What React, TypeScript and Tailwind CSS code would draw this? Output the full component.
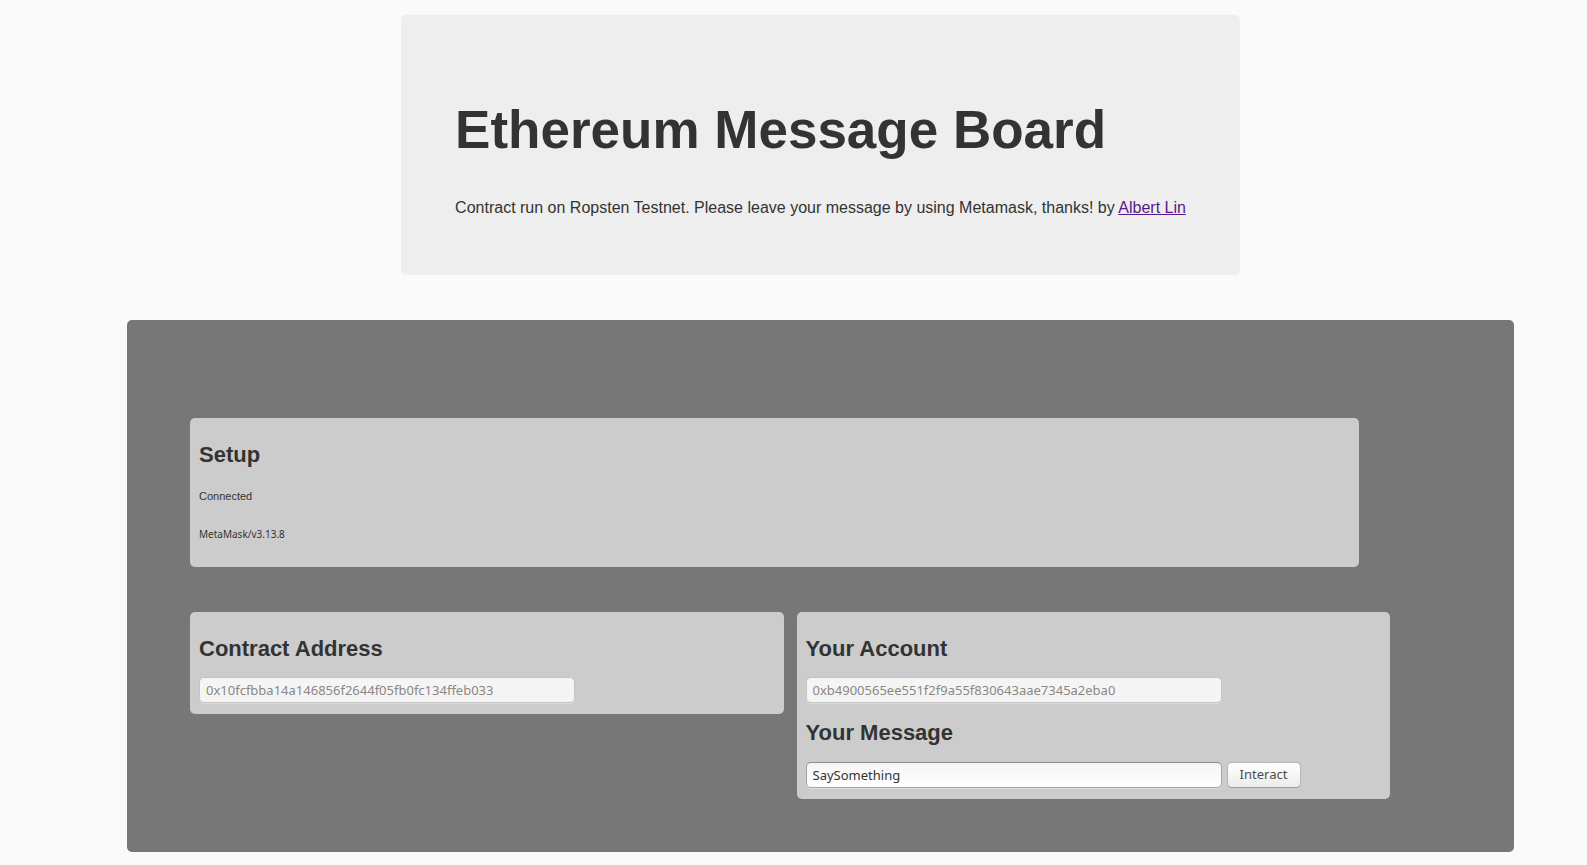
import { useState } from "react";
import type { ReactNode } from "react";

function Panel({ className = "", children }: { className?: string; children: ReactNode }) {
  return <section className={`rounded-[5px] bg-[#ccc] px-[9px] ${className}`}>{children}</section>;
}

function PanelTitle({ children, htmlFor }: { children: ReactNode; htmlFor?: string }) {
  return (
    <h2 className="text-[22px] leading-[26px] font-bold">
      {htmlFor ? <label htmlFor={htmlFor}>{children}</label> : children}
    </h2>
  );
}

const disabledField =
  "h-[26px] w-full rounded-[5px] border border-[#c4c4c4] bg-[#f5f5f5] px-[6px] font-['Noto_Sans',sans-serif] text-[13px] text-[#8b8782] shadow-[0_1px_0_#dcdcdc]";

export default function App() {
  const [message, setMessage] = useState("SaySomething");

  return (
    <div className="min-h-screen bg-[#fafafa] pt-[15px] pr-[73px] pb-[13px] pl-[127px] font-['Liberation_Sans',Arial,sans-serif] text-[#333]">
      <header className="mx-auto w-fit rounded-[5px] bg-[#eee] px-[54px] pt-[82px] pb-[57px]">
        <h1 className="text-[53px] leading-[66px] font-bold">Ethereum Message Board</h1>
        <p className="mt-[35px] text-[16px] leading-[20px]">
          Contract run on Ropsten Testnet. Please leave your message by using Metamask, thanks! by{" "}
          <a href="#albert-lin" className="text-[#551a8b] underline">
            Albert Lin
          </a>
        </p>
      </header>

      <main className="mt-[45px] rounded-[5px] bg-[#777] pt-[98px] pr-[124px] pb-[53px] pl-[63px]">
        <Panel className="mr-[31px] pt-[24px] pb-[25px]">
          <PanelTitle>Setup</PanelTitle>
          <p className="mt-[20px] text-[11px] leading-[16px]">Connected</p>
          <p className="mt-[22px] font-['Noto_Sans',sans-serif] text-[10px] leading-[16px]">MetaMask/v3.13.8</p>
        </Panel>

        <div className="mt-[45px] grid grid-cols-2 items-start gap-[13px]">
          <Panel className="pt-[24px] pb-[11px]">
            <PanelTitle htmlFor="contract">Contract Address</PanelTitle>
            <div className="mt-[15px] flex w-[376px] max-w-full">
              <input
                id="contract"
                disabled
                className={disabledField}
                defaultValue="0x10fcfbba14a146856f2644f05fb0fc134ffeb033"
              />
            </div>
          </Panel>

          <Panel className="pt-[24px] pb-[11px]">
            <PanelTitle htmlFor="account">Your Account</PanelTitle>
            <div className="mt-[15px] flex w-[416px] max-w-full">
              <input
                id="account"
                disabled
                className={disabledField}
                defaultValue="0xb4900565ee551f2f9a55f830643aae7345a2eba0"
              />
            </div>
            <div className="mt-[17px]">
              <PanelTitle htmlFor="message">Your Message</PanelTitle>
            </div>
            <div className="mt-[16px] flex gap-[5px]">
              <input
                id="message"
                value={message}
                onChange={(event) => setMessage(event.target.value)}
                className="h-[26px] w-[416px] min-w-0 rounded-[5px] border border-[#a3a3a3] border-t-[#8c8c8c] bg-linear-to-b from-[#f5f5f5] to-white px-[6px] font-['Noto_Sans',sans-serif] text-[13px] shadow-[0_1px_0_#e2e2e2]"
              />
              <button
                type="button"
                className="h-[26px] w-[74px] shrink-0 rounded-[5px] border border-[#b4b4b4] border-b-[#9a9a9a] bg-linear-to-b from-white to-[#ececeb] font-['Noto_Sans',sans-serif] text-[13px] text-[#4c4c4c]"
              >
                Interact
              </button>
            </div>
          </Panel>
        </div>
      </main>
    </div>
  );
}
